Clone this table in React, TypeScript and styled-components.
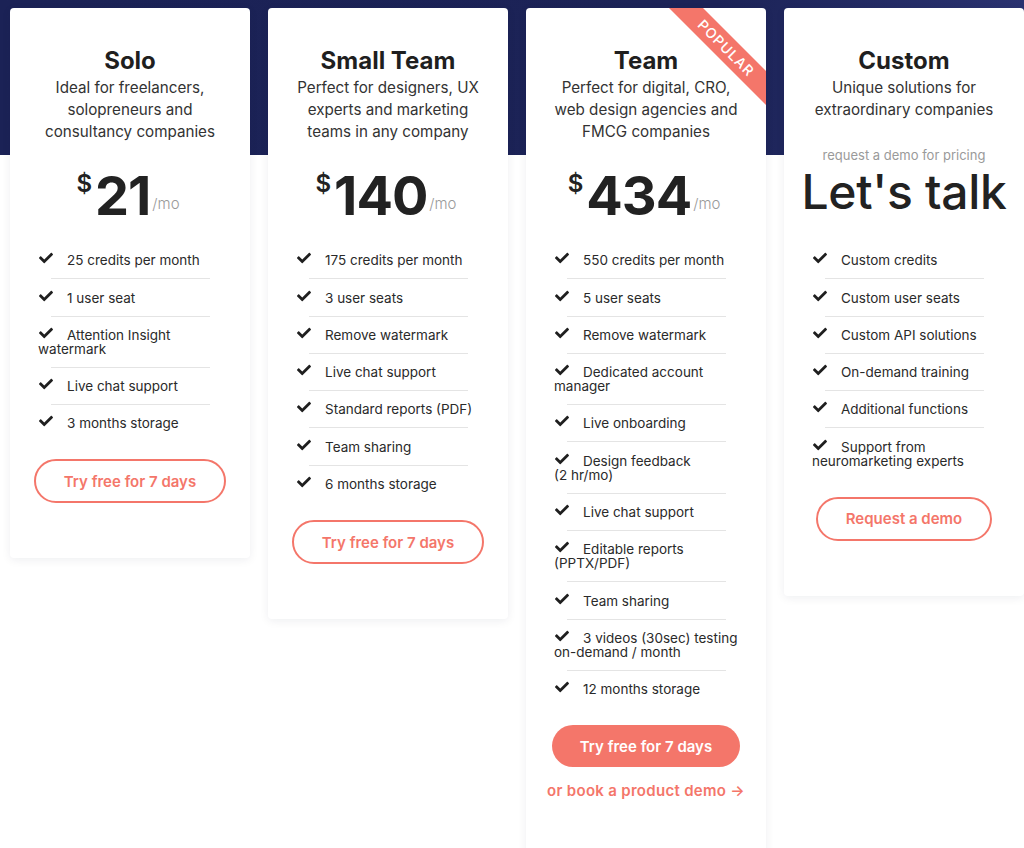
import styled, { createGlobalStyle } from "styled-components";
import { FaCheck } from "react-icons/fa";

const FONT = `"Inter", "Liberation Sans", sans-serif`;
const CORAL = "#f4766a";

type Plan = {
  title: string;
  desc: string[];
  price?: string;
  features: string[];
  cta: string;
  filled?: boolean;
  popular?: boolean;
  demoLink?: boolean;
};

// "\n" marks where the reference breaks a feature onto a second line
const plans: Plan[] = [
  {
    title: "Solo",
    desc: ["Ideal for freelancers,", "solopreneurs and", "consultancy companies"],
    price: "21",
    features: [
      "25 credits per month",
      "1 user seat",
      "Attention Insight\nwatermark",
      "Live chat support",
      "3 months storage",
    ],
    cta: "Try free for 7 days",
  },
  {
    title: "Small Team",
    desc: ["Perfect for designers, UX", "experts and marketing", "teams in any company"],
    price: "140",
    features: [
      "175 credits per month",
      "3 user seats",
      "Remove watermark",
      "Live chat support",
      "Standard reports (PDF)",
      "Team sharing",
      "6 months storage",
    ],
    cta: "Try free for 7 days",
  },
  {
    title: "Team",
    desc: ["Perfect for digital, CRO,", "web design agencies and", "FMCG companies"],
    price: "434",
    features: [
      "550 credits per month",
      "5 user seats",
      "Remove watermark",
      "Dedicated account\nmanager",
      "Live onboarding",
      "Design feedback\n(2 hr/mo)",
      "Live chat support",
      "Editable reports\n(PPTX/PDF)",
      "Team sharing",
      "3 videos (30sec) testing\non-demand / month",
      "12 months storage",
    ],
    cta: "Try free for 7 days",
    filled: true,
    popular: true,
    demoLink: true,
  },
  {
    title: "Custom",
    desc: ["Unique solutions for", "extraordinary companies"],
    features: [
      "Custom credits",
      "Custom user seats",
      "Custom API solutions",
      "On-demand training",
      "Additional functions",
      "Support from\nneuromarketing experts",
    ],
    cta: "Request a demo",
  },
];

export default function App() {
  return (
    <>
      <GlobalStyle />
      <Page>
        {plans.map((plan) => (
          <Card key={plan.title} $tall={!!plan.demoLink}>
            {plan.popular && <Ribbon>POPULAR</Ribbon>}
            <Title>{plan.title}</Title>
            <Desc>
              {plan.desc.map((line) => (
                <div key={line}>{line}</div>
              ))}
            </Desc>
            <PriceBox>
              {plan.price ? (
                <PriceRow>
                  <Currency>$</Currency>
                  <Amount>{plan.price}</Amount>
                  <Per>/mo</Per>
                </PriceRow>
              ) : (
                <>
                  <PriceNote>request a demo for pricing</PriceNote>
                  <LetsTalk>Let's talk</LetsTalk>
                </>
              )}
            </PriceBox>
            <Features>
              {plan.features.map((f) => (
                <Feature key={f}>
                  <CheckIcon />
                  {f}
                </Feature>
              ))}
            </Features>
            <Actions>
              <CtaButton $filled={!!plan.filled}>{plan.cta}</CtaButton>
              {plan.demoLink && <DemoLink>or book a product demo →</DemoLink>}
            </Actions>
          </Card>
        ))}
      </Page>
    </>
  );
}

const GlobalStyle = createGlobalStyle`
  html, body {
    margin: 0;
    padding: 0;
    background: #ffffff;
  }
  body {
    font-family: ${FONT};
    color: #222;
    -webkit-font-smoothing: antialiased;
  }
`;

const Page = styled.div`
  height: 848px;
  display: flex;
  align-items: flex-start;
  gap: 18px;
  padding: 8px 0 0 10px;
  box-sizing: border-box;
  overflow: hidden;
  background:
    linear-gradient(to right, #1b2256 0%, #1c2357 70%, #2a3270 100%) top / 100% 155px no-repeat,
    #ffffff;
`;

const Card = styled.div<{ $tall: boolean }>`
  position: relative;
  overflow: hidden;
  flex: 0 0 240px;
  width: 240px;
  box-sizing: border-box;
  background: #fff;
  border-radius: 4px;
  box-shadow: 0 2px 10px rgba(20, 24, 60, 0.07);
  padding: 39px 0 ${({ $tall }) => ($tall ? "90px" : "55px")};
  display: flex;
  flex-direction: column;
  align-items: center;
`;

const Ribbon = styled.div`
  position: absolute;
  left: 100px;
  top: 28px;
  width: 200px;
  height: 24px;
  background: ${CORAL};
  color: #fff;
  font-size: 14px;
  font-weight: 500;
  letter-spacing: 1px;
  line-height: 24px;
  text-align: center;
  transform: rotate(45deg);
`;

const Title = styled.h2`
  margin: 0 0 2px;
  font-size: 24px;
  line-height: 28px;
  font-weight: 700;
  color: #1f1f1f;
`;

const Desc = styled.div`
  height: 66px;
  font-size: 15.2px;
  line-height: 22px;
  color: #333;
  text-align: center;
`;

const PriceBox = styled.div`
  height: 99px;
  width: 100%;
  display: flex;
  flex-direction: column;
  align-items: center;
`;

const PriceRow = styled.div`
  display: flex;
  align-items: flex-start;
  padding-top: 22px;
  margin-left: -4px;
`;

const Currency = styled.span`
  font-size: 24px;
  line-height: 30px;
  font-weight: 600;
  color: #222;
  margin-top: 4px;
  margin-right: 3px;
`;

const Amount = styled.span`
  font-size: 54px;
  line-height: 62px;
  font-weight: 700;
  letter-spacing: -1px;
  color: #222;
`;

const Per = styled.span`
  align-self: flex-end;
  margin-bottom: 14px;
  margin-left: 2px;
  font-size: 15px;
  font-weight: 300;
  color: #9a9a9a;
`;

const PriceNote = styled.div`
  margin-top: 5px;
  font-size: 13px;
  line-height: 14px;
  color: #9a9a9a;
`;

const LetsTalk = styled.div`
  margin-top: 8px;
  font-size: 48px;
  line-height: 44px;
  font-weight: 500;
  color: #222;
  letter-spacing: -0.3px;
`;

const Features = styled.ul`
  list-style: none;
  margin: 0;
  padding: 0 0 0 28px;
  align-self: flex-start;
  width: 182px;
`;

const Feature = styled.li`
  padding-top: 11.3px;
  font-size: 13.5px;
  line-height: 14px;
  white-space: pre;
  color: #2a2a2a;

  &::after {
    content: "";
    display: block;
    margin: 11px 10px 0 13px;
    height: 1px;
    background: #e4e4e4;
  }

  &:last-child::after {
    background: transparent;
  }
`;

const CheckIcon = styled(FaCheck)`
  position: relative;
  top: -2px;
  width: 16px;
  height: 14px;
  color: #1f1f1f;
  margin-right: 13px;
  vertical-align: top;
`;

const Actions = styled.div`
  display: flex;
  flex-direction: column;
  align-items: center;
  margin-top: 17px;
`;

const CtaButton = styled.button<{ $filled: boolean }>`
  height: ${({ $filled }) => ($filled ? "42px" : "44px")};
  padding: 0 28px;
  border-radius: 22px;
  border: ${({ $filled }) => ($filled ? "none" : `2px solid ${CORAL}`)};
  background: ${({ $filled }) => ($filled ? CORAL : "#fff")};
  color: ${({ $filled }) => ($filled ? "#fff" : CORAL)};
  font-family: ${FONT};
  font-size: 15px;
  font-weight: 600;
  cursor: pointer;
`;

const DemoLink = styled.a`
  margin-top: 14px;
  font-size: 15px;
  font-weight: 600;
  letter-spacing: 0.3px;
  color: ${CORAL};
  text-decoration: none;
  cursor: pointer;
`;
